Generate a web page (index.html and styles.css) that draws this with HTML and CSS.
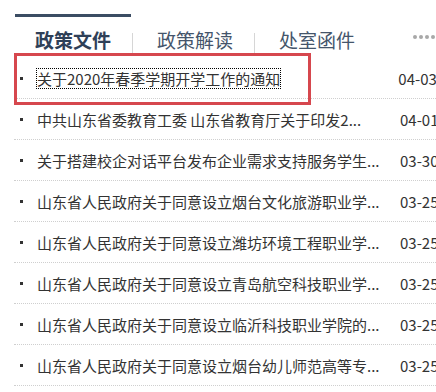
FILE: index.html
```html
<!DOCTYPE html>
<html lang="zh-CN">
<head>
<meta charset="utf-8">
<title>政策文件</title>
<link rel="stylesheet" href="styles.css">
</head>
<body>
<div class="panel">
  <div class="tabs">
    <div class="tab active">政策文件</div>
    <span class="sep"></span>
    <div class="tab">政策解读</div>
    <span class="sep"></span>
    <div class="tab">处室函件</div>
    <div class="more"><i></i><i></i><i></i><i></i></div>
  </div>
  <ul class="list">
    <li><a class="title focused" href="#">关于2020年春季学期开学工作的通知</a><span class="date">04-03</span></li>
    <li><a class="title" href="#">中共山东省委教育工委 山东省教育厅关于印发2...</a><span class="date">04-01</span></li>
    <li><a class="title" href="#">关于搭建校企对话平台发布企业需求支持服务学生...</a><span class="date">03-30</span></li>
    <li><a class="title" href="#">山东省人民政府关于同意设立烟台文化旅游职业学...</a><span class="date">03-25</span></li>
    <li><a class="title" href="#">山东省人民政府关于同意设立潍坊环境工程职业学...</a><span class="date">03-25</span></li>
    <li><a class="title" href="#">山东省人民政府关于同意设立青岛航空科技职业学...</a><span class="date">03-25</span></li>
    <li><a class="title" href="#">山东省人民政府关于同意设立临沂科技职业学院的...</a><span class="date">03-25</span></li>
    <li><a class="title" href="#">山东省人民政府关于同意设立烟台幼儿师范高等专...</a><span class="date">03-25</span></li>
  </ul>
  <div class="highlight"></div>
</div>
</body>
</html>
```

FILE: styles.css
```css
html, body {
  margin: 0;
  padding: 0;
  background: #fff;
  overflow: hidden;
}
body {
  width: 436px;
  height: 392px;
  font-family: "Noto Sans CJK SC", "Noto Sans", sans-serif;
}
.panel {
  position: relative;
  width: 436px;
  height: 392px;
  overflow: hidden;
}
.tabs {
  display: flex;
  align-items: flex-end;
  padding-left: 15px;
  padding-top: 14px;
  height: 39px;
}
.tab {
  padding: 10px 20px 0;
  height: 29px;
  line-height: 26px;
  font-size: 19px;
  color: #44556b;
  white-space: nowrap;
  border-top: 3px solid transparent;
  box-sizing: border-box;
  height: 39px;
}
.tab.active {
  border-top-color: #3b4d63;
  font-weight: bold;
  color: #2f4058;
}
.sep {
  width: 1px;
  height: 20px;
  background: #d6d6d6;
  margin: 0 4px 0 1px;
}
.more {
  display: flex;
  gap: 2px;
  margin-left: 38px;
  align-self: flex-start;
  margin-top: 21px;
}
.more i {
  display: block;
  width: 4px;
  height: 4px;
  border-radius: 50%;
  background: #a8a8a8;
}
.list {
  list-style: none;
  margin: 5px 0 0 14px;
  padding: 0;
  width: 440px;
}
.list li {
  display: flex;
  align-items: center;
  height: 40px;
  border-bottom: 1px dotted #cfcfcf;
  font-size: 15px;
  color: #333;
  white-space: nowrap;
}
.list li::before {
  content: "";
  width: 3px;
  height: 3px;
  background: #333;
  margin: 0 14px 0 6px;
  flex: none;
}
.title {
  color: #333;
  text-decoration: none;
  width: 363px;
  flex: none;
  overflow: hidden;
}
.title.focused {
  width: auto;
  display: inline-block;
  line-height: 19px;
  outline: 1px dotted #000;
  outline-offset: 0;
  margin-right: 118px;
}
.date {
  flex: none;
  color: #333;
}
.highlight {
  position: absolute;
  left: 14px;
  top: 53px;
  width: 297px;
  height: 52px;
  border: 3px solid #d6474e;
  box-sizing: border-box;
}
```
